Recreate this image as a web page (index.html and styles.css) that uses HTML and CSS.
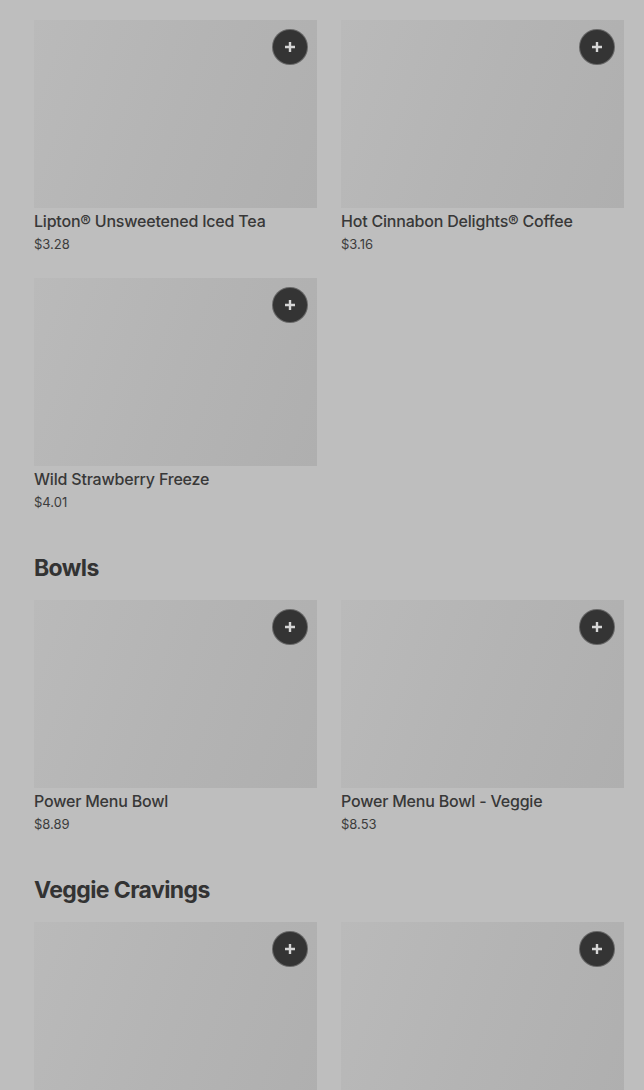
FILE: index.html
```html
<!DOCTYPE html>
<html lang="en">
<head>
    <meta charset="UTF-8">
    <meta name="viewport" content="width=device-width, initial-scale=1.0">
    <title>Menu</title>
    <link rel="stylesheet" href="styles.css">
</head>
<body>
<div class="menu">

    <section class="category">
        <div class="grid">
            <div class="card">
                <div class="thumb"><button class="add"><svg viewBox="0 0 12 12"><path d="M6 1v10M1 6h10"/></svg></button></div>
                <p class="name">Lipton® Unsweetened Iced Tea</p>
                <p class="price">$3.28</p>
            </div>
            <div class="card">
                <div class="thumb"><button class="add"><svg viewBox="0 0 12 12"><path d="M6 1v10M1 6h10"/></svg></button></div>
                <p class="name">Hot Cinnabon Delights® Coffee</p>
                <p class="price">$3.16</p>
            </div>
            <div class="card">
                <div class="thumb"><button class="add"><svg viewBox="0 0 12 12"><path d="M6 1v10M1 6h10"/></svg></button></div>
                <p class="name">Wild Strawberry Freeze</p>
                <p class="price">$4.01</p>
            </div>
        </div>
    </section>

    <section class="category">
        <h2>Bowls</h2>
        <div class="grid">
            <div class="card">
                <div class="thumb"><button class="add"><svg viewBox="0 0 12 12"><path d="M6 1v10M1 6h10"/></svg></button></div>
                <p class="name">Power Menu Bowl</p>
                <p class="price">$8.89</p>
            </div>
            <div class="card">
                <div class="thumb"><button class="add"><svg viewBox="0 0 12 12"><path d="M6 1v10M1 6h10"/></svg></button></div>
                <p class="name">Power Menu Bowl - Veggie</p>
                <p class="price">$8.53</p>
            </div>
        </div>
    </section>

    <section class="category">
        <h2>Veggie Cravings</h2>
        <div class="grid">
            <div class="card">
                <div class="thumb"><button class="add"><svg viewBox="0 0 12 12"><path d="M6 1v10M1 6h10"/></svg></button></div>
            </div>
            <div class="card">
                <div class="thumb"><button class="add"><svg viewBox="0 0 12 12"><path d="M6 1v10M1 6h10"/></svg></button></div>
            </div>
        </div>
    </section>

</div>
</body>
</html>
```

FILE: styles.css
```css
/* menu page, dimmed behind an overlay */
body {
    margin: 0;
    background-color: #bebebe;
    font-family: Inter, Roboto, "Liberation Sans", sans-serif;
    color: #363636;
}

.menu {
    padding: 20px 20px 40px 34px;
}

.category + .category {
    margin-top: 42px;
}

h2 {
    margin: 0 0 17px;
    font-size: 23px;
    line-height: 30px;
    font-weight: 700;
    letter-spacing: -0.6px;
    color: #333;
}

.grid {
    display: grid;
    grid-template-columns: 283px 283px;
    column-gap: 24px;
    row-gap: 25px;
}

.thumb {
    position: relative;
    height: 188px;
    background: linear-gradient(110deg, #bababa 0%, #b4b4b4 50%, #afafaf 100%);
}

.add {
    position: absolute;
    top: 9px;
    right: 9px;
    display: flex;
    align-items: center;
    justify-content: center;
    width: 36px;
    height: 36px;
    padding: 0;
    border-radius: 50%;
    border: 1px solid rgba(255, 255, 255, 0.25);
    background-color: #343434;
}

.add svg {
    width: 12px;
    height: 12px;
    stroke: #d6d6d6;
    stroke-width: 2.4;
    fill: none;
}

.name {
    margin: 3px 0 0;
    font-size: 16px;
    line-height: 20px;
    font-weight: 500;
    letter-spacing: -0.2px;
    color: #383838;
}

.price {
    margin: 4px 0 0;
    font-size: 13px;
    line-height: 18px;
    color: #3c3c3c;
}
```
